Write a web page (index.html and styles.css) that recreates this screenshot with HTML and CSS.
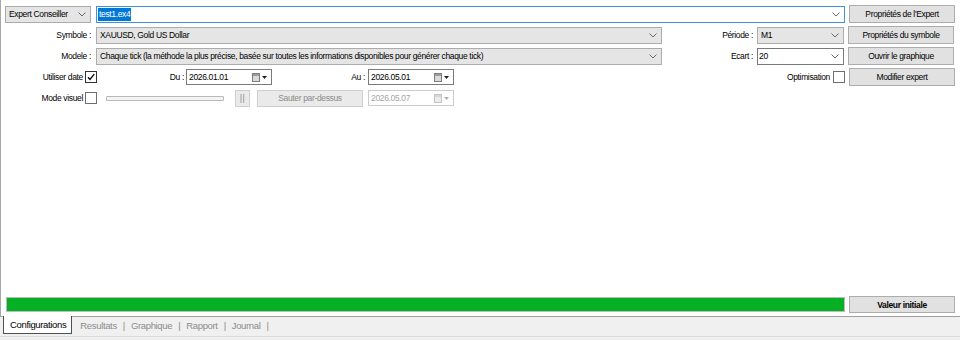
FILE: index.html
```html
<!DOCTYPE html>
<html lang="fr">
<head>
<meta charset="utf-8">
<title>Testeur de stratégie</title>
<link rel="stylesheet" href="styles.css">
</head>
<body>
<div class="app">
  <div class="main">
    <div class="form">
      <div class="row">
        <div class="combo ro w-type"><span class="val">Expert Conseiller</span><svg class="chev" width="8" height="5" viewBox="0 0 8 5"><path d="M0.5 0.5 L4 4 L7.5 0.5" fill="none" stroke="#6a6a6a" stroke-width="1"/></svg></div>
        <div class="combo edit focus w-expert"><span class="val"><span class="sel">test1.ex4</span></span><svg class="chev" width="8" height="5" viewBox="0 0 8 5"><path d="M0.5 0.5 L4 4 L7.5 0.5" fill="none" stroke="#6a6a6a" stroke-width="1"/></svg></div>
        <button class="btn">Propriétés de l'Expert</button>
      </div>
      <div class="row">
        <div class="lbl l-first">Symbole :</div>
        <div class="combo ro w-wide"><span class="val">XAUUSD, Gold US Dollar</span><svg class="chev" width="8" height="5" viewBox="0 0 8 5"><path d="M0.5 0.5 L4 4 L7.5 0.5" fill="none" stroke="#6a6a6a" stroke-width="1"/></svg></div>
        <div class="lbl l-mid">Période :</div>
        <div class="combo ro w-small"><span class="val">M1</span><svg class="chev" width="8" height="5" viewBox="0 0 8 5"><path d="M0.5 0.5 L4 4 L7.5 0.5" fill="none" stroke="#6a6a6a" stroke-width="1"/></svg></div>
        <button class="btn">Propriétés du symbole</button>
      </div>
      <div class="row">
        <div class="lbl l-first">Modele :</div>
        <div class="combo ro w-wide"><span class="val">Chaque tick (la méthode la plus précise, basée sur toutes les informations disponibles pour générer chaque tick)</span><svg class="chev" width="8" height="5" viewBox="0 0 8 5"><path d="M0.5 0.5 L4 4 L7.5 0.5" fill="none" stroke="#6a6a6a" stroke-width="1"/></svg></div>
        <div class="lbl l-mid">Ecart :</div>
        <div class="combo edit w-small"><span class="val">20</span><svg class="chev" width="8" height="5" viewBox="0 0 8 5"><path d="M0.5 0.5 L4 4 L7.5 0.5" fill="none" stroke="#6a6a6a" stroke-width="1"/></svg></div>
        <button class="btn">Ouvrir le graphique</button>
      </div>
      <div class="row">
        <div class="lbl l-check">Utiliser date</div>
        <span class="check"><svg width="10" height="10" viewBox="0 0 10 10"><path d="M2 5.2 L4 7.4 L8.2 2.2" fill="none" stroke="#000" stroke-width="1.3"/></svg></span>
        <div class="lbl l-du">Du :</div>
        <div class="picker"><span class="val">2026.01.01</span><svg class="cal" width="8" height="9" viewBox="0 0 8 9"><rect x="0.5" y="0.5" width="7" height="8" fill="#dadada" stroke="#7d7d7d"/><rect x="1" y="1" width="6" height="2" fill="#9c9c9c"/></svg><svg class="tri" width="5" height="3" viewBox="0 0 5 3"><path d="M0 0 H5 L2.5 3 Z" fill="#202020"/></svg></div>
        <div class="lbl l-au">Au :</div>
        <div class="picker"><span class="val">2026.05.01</span><svg class="cal" width="8" height="9" viewBox="0 0 8 9"><rect x="0.5" y="0.5" width="7" height="8" fill="#dadada" stroke="#7d7d7d"/><rect x="1" y="1" width="6" height="2" fill="#9c9c9c"/></svg><svg class="tri" width="5" height="3" viewBox="0 0 5 3"><path d="M0 0 H5 L2.5 3 Z" fill="#202020"/></svg></div>
        <div class="spacer"></div>
        <div class="lbl l-opt">Optimisation</div>
        <span class="check light"></span>
        <button class="btn">Modifier expert</button>
      </div>
      <div class="row">
        <div class="lbl l-check">Mode visuel</div>
        <span class="check light"></span>
        <div class="slider"></div>
        <button class="btn pause" disabled>||</button>
        <button class="btn skip" disabled>Sauter par-dessus</button>
        <div class="picker disabled"><span class="val">2026.05.07</span><svg class="cal" width="8" height="9" viewBox="0 0 8 9"><rect x="0.5" y="0.5" width="7" height="8" fill="#ececec" stroke="#c4c4c4"/><rect x="1" y="1" width="6" height="2" fill="#d6d6d6"/></svg><svg class="tri" width="5" height="3" viewBox="0 0 5 3"><path d="M0 0 H5 L2.5 3 Z" fill="#b0b0b0"/></svg></div>
      </div>
    </div>
    <div class="spacer"></div>
    <div class="progress-row">
      <div class="progress"><div class="fill" style="width:100%"></div></div>
      <button class="btn bold">Valeur initiale</button>
    </div>
  </div>
  <div class="tabs-wrap">
    <div class="tabs">
      <span class="tab active">Configurations</span>
      <span class="tab">Resultats</span><span class="sep">|</span>
      <span class="tab">Graphique</span><span class="sep">|</span>
      <span class="tab">Rapport</span><span class="sep">|</span>
      <span class="tab">Journal</span><span class="sep">|</span>
    </div>
  </div>
</div>
</body>
</html>
```

FILE: styles.css
```css
* { box-sizing: border-box; }
html, body { margin: 0; padding: 0; }
body {
  width: 960px;
  height: 340px;
  overflow: hidden;
  background: #fff;
  color: #000;
  font-family: "Liberation Sans", Arial, sans-serif;
  font-size: 8.5px;
  letter-spacing: -0.35px;
}
.app { display: flex; flex-direction: column; height: 340px; }
.main {
  flex: 1;
  display: flex;
  flex-direction: column;
  border-left: 1px solid #a8a8a8;
}
.form { display: flex; flex-direction: column; gap: 3px; padding: 5px 5px 0 4px; }
.row { display: flex; align-items: center; height: 18px; }
.spacer { flex: 1; }

.lbl { display: flex; justify-content: flex-end; align-items: center; white-space: nowrap; }
.l-first { width: 91px; padding-right: 5px; }
.l-mid { width: 95px; padding-right: 4px; }
.l-check { width: 80px; padding-right: 2px; }
.l-du { width: 89px; padding-right: 2px; }
.l-au { width: 96px; padding-right: 3px; }
.l-opt { padding-right: 3px; }

.combo {
  display: flex;
  align-items: center;
  height: 17px;
  border: 1px solid #acacac;
  background: #e5e5e5;
  padding: 0 4px 0 3px;
}
.combo .val { flex: 1; white-space: nowrap; overflow: hidden; }
.combo.edit { background: #fff; border-color: #7a7a7a; padding-left: 1px; }
.combo.focus { border-color: #3f93dc; }
.sel { display: inline-block; line-height: 13px; background: #0078d7; color: #fff; padding: 0 1px; }
.chev { flex: none; }
.w-type { width: 86px; margin-right: 5px; }
.w-expert { width: 749px; }
.w-wide { width: 566px; }
.w-small { width: 87px; }

.btn {
  margin-left: 4px;
  width: 106px;
  height: 18px;
  padding: 0;
  border: 1px solid #adadad;
  background: #e1e1e1;
  color: #000;
  font: inherit;
  letter-spacing: inherit;
  white-space: nowrap;
}
.btn.bold { font-weight: bold; height: 17px; }
.btn:disabled { color: #8a8a8a; border-color: #cfcfcf; background: #eaeaea; }
.pause { width: 15px; height: 17px; margin-left: 11px; font-size: 9px; letter-spacing: 0.5px; color: #b0b0b0; }
.skip { margin-left: 7px; height: 17px; }

.check {
  width: 12px;
  height: 12px;
  border: 1px solid #333;
  background: #fff;
  display: flex;
  align-items: center;
  justify-content: center;
  flex: none;
}
.check.light { border-color: #6f6f6f; }

.picker {
  display: flex;
  align-items: center;
  width: 86px;
  height: 16px;
  border: 1px solid #7a7a7a;
  background: #fff;
  padding: 0 4px 0 2px;
}
.picker .val { flex: 1; }
.picker .cal { margin-right: 2px; }
.picker.disabled { margin-left: 5px; border-color: #cccccc; color: #a6a6a6; }

.slider {
  width: 118px;
  height: 5px;
  margin-left: 9px;
  border: 1px solid #b8b8b8;
  border-radius: 1px;
  background: #f4f4f4;
}

.progress-row {
  display: flex;
  align-items: center;
  height: 17px;
  margin-bottom: 3px;
  padding: 0 5px 0 5px;
}
.progress {
  flex: 1;
  height: 15px;
  border: 1px solid #bcbcbc;
  background: #e6e6e6;
}
.fill { height: 100%; background: #06b025; }

.tabs-wrap { height: 24px; background: #f0f0f0; border-top: 1px solid #a0a0a0; }
.tabs {
  display: flex;
  align-items: flex-start;
  height: 20px;
  padding-left: 3px;
  border-bottom: 1px solid #dcdcdc;
  font-size: 9.5px;
  letter-spacing: -0.35px;
}
.tab {
  height: 17px;
  display: flex;
  align-items: center;
  padding: 0 6px;
  color: #8c8c8c;
}
.tab.active {
  margin-top: -1px;
  height: 18px;
  color: #000;
  background: #fff;
  border: 1px solid #505050;
  border-top: none;
  padding: 0 5px 0 6px;
  margin-right: 2px;
}
.sep { height: 17px; display: flex; align-items: center; color: #8a8a8a; }
```
